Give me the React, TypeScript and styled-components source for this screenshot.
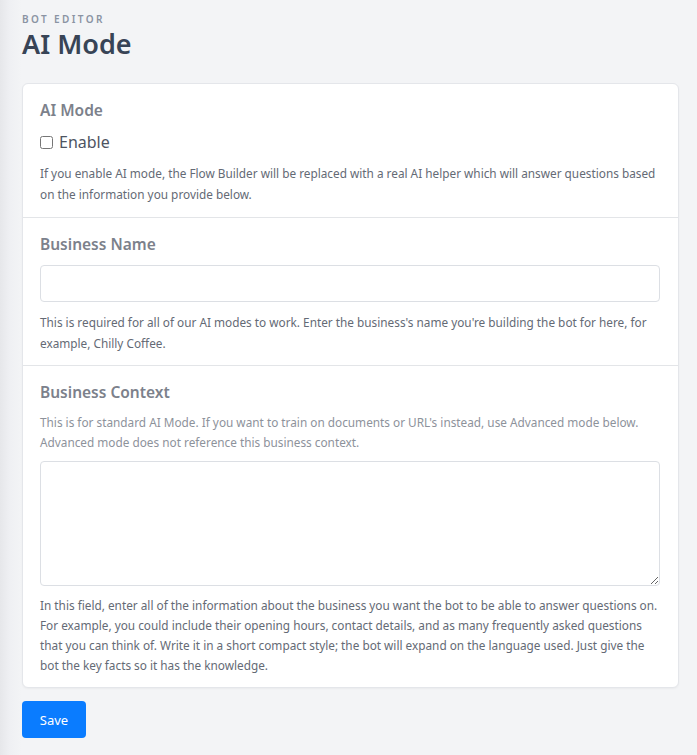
import { createGlobalStyle } from "styled-components"
import styled from "styled-components"

const GlobalStyle = createGlobalStyle`
  html, body {
    margin: 0;
    padding: 0;
  }
  body {
    font-family: "Noto Sans", "Open Sans", sans-serif;
    background: linear-gradient(to right, #e6e7ea 0px, #eff0f3 10px, #f3f4f6 22px, #f3f4f6 100%);
    min-height: 755px;
  }
`

const Page = styled.div`
  padding: 13px 18px 16px 22px;
`

const Header = styled.header`
  display: flex;
  flex-direction: column;
  margin-bottom: 23px;
`

const Eyebrow = styled.div`
  font-size: 10px;
  font-weight: 600;
  letter-spacing: 2.4px;
  text-transform: uppercase;
  color: #8a93a3;
  line-height: 12px;
  margin-bottom: 2px;
`

const Title = styled.h1`
  margin: 0;
  font-size: 27px;
  font-weight: 600;
  color: #384456;
  line-height: 33px;
`

const Card = styled.div`
  background: #fff;
  border-radius: 6px;
  border: 1px solid #e4e6ea;
  box-shadow: 0 1px 2px rgba(0, 0, 0, 0.04);
`

const Section = styled.section<{ $bottom?: number }>`
  padding: 14px 18px ${(p) => p.$bottom ?? 12}px 17px;
  border-bottom: 1px solid #e3e5e8;

  &:last-child {
    border-bottom: none;
  }
`

const SectionTitle = styled.h2`
  margin: 0 0 9px 0;
  font-size: 15.5px;
  font-weight: 600;
  color: #7c818b;
  line-height: 24px;
`

const CheckRow = styled.label`
  display: flex;
  align-items: center;
  gap: 6px;
  font-size: 16px;
  color: #4e5462;
  line-height: 22px;
  margin: 1px 0 10px 0;

  input {
    margin: 0;
    width: 13px;
    height: 13px;
  }
`

const Help = styled.p<{ $muted?: boolean; $tight?: boolean }>`
  margin: 0;
  font-size: 11.8px;
  line-height: ${(p) => (p.$muted ? "19.5px" : p.$tight ? "20px" : "20.5px")};
  color: ${(p) => (p.$muted ? "#8d929b" : "#646a75")};
`

const TextInput = styled.input`
  display: block;
  box-sizing: border-box;
  width: 100%;
  height: 37px;
  border: 1px solid #dcdfe4;
  border-radius: 4px;
  padding: 6px 10px;
  font: inherit;
  margin-bottom: 10px;
`

const TextArea = styled.textarea`
  display: block;
  box-sizing: border-box;
  width: 100%;
  height: 125px;
  border: 1px solid #dcdfe4;
  border-radius: 4px;
  padding: 6px 10px;
  font: inherit;
  margin: 9px 0 9px 0;
`

const SaveButton = styled.button`
  margin-top: 13px;
  width: 64px;
  height: 37px;
  border: none;
  border-radius: 4px;
  background: #0a7cff;
  color: #fff;
  font-family: inherit;
  font-size: 13px;
  cursor: pointer;
`

export default function App() {
  return (
    <>
      <GlobalStyle />
      <Page>
        <Header>
          <Eyebrow>Bot Editor</Eyebrow>
          <Title>AI Mode</Title>
        </Header>
        <Card>
          <Section $bottom={13}>
            <SectionTitle>AI Mode</SectionTitle>
            <CheckRow>
              <input type="checkbox" />
              Enable
            </CheckRow>
            <Help>
              If you enable AI mode, the Flow Builder will be replaced with a real AI helper which
              will answer questions based on the information you provide below.
            </Help>
          </Section>
          <Section>
            <SectionTitle>Business Name</SectionTitle>
            <TextInput type="text" />
            <Help>
              This is required for all of our AI modes to work. Enter the business's name you're
              building the bot for here, for example, Chilly Coffee.
            </Help>
          </Section>
          <Section>
            <SectionTitle>Business Context</SectionTitle>
            <Help $muted>
              This is for standard AI Mode. If you want to train on documents or URL's instead, use
              Advanced mode below. Advanced mode does not reference this business context.
            </Help>
            <TextArea />
            <Help $tight>
              In this field, enter all of the information about the business you want the bot to be
              able to answer questions on. For example, you could include their opening hours,
              contact details, and as many frequently asked questions that you can think of. Write it
              in a short compact style; the bot will expand on the language used. Just give the bot
              the key facts so it has the knowledge.
            </Help>
          </Section>
        </Card>
        <SaveButton>Save</SaveButton>
      </Page>
    </>
  )
}
